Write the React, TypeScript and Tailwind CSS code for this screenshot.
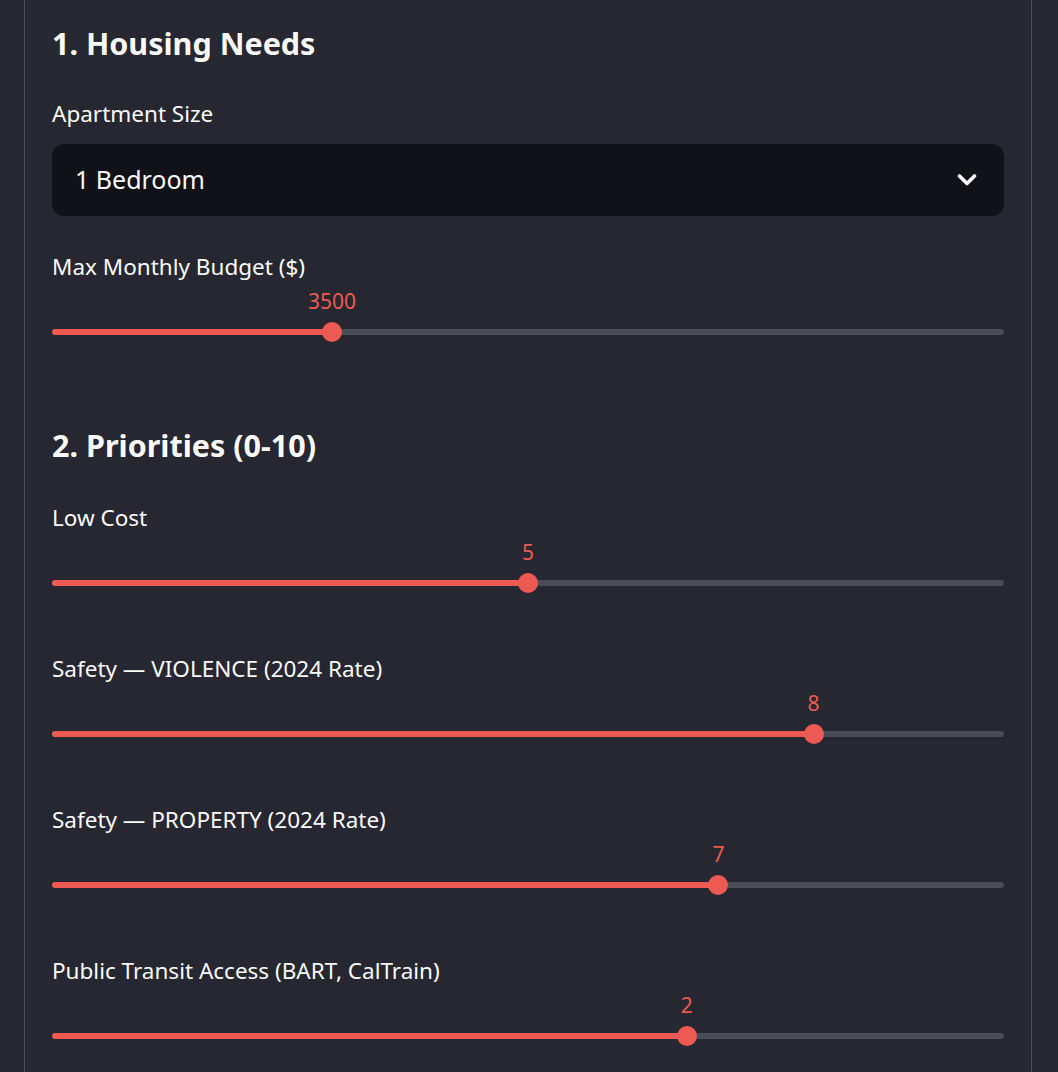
import { CSSProperties } from 'react';

type SliderProps = {
  label: string;
  value: string;
  frac: number;
};

const font: CSSProperties = { fontFamily: '"Noto Sans", "Open Sans", sans-serif' };

const Slider = ({ label, value, frac }: SliderProps) => {
  const pct = `${frac * 100}%`;
  return (
    <div className="flex flex-col">
      <div className="h-[30px] text-[22.5px] leading-[30px] text-[#fafafa]">{label}</div>
      {/* current value sits centred over the thumb */}
      <div className="mt-[7px] flex h-[24px]">
        <div className="flex-none" style={{ width: pct }} />
        <span className="-translate-x-1/2 text-[21px] leading-[24px] text-[#ec5a53]">{value}</span>
      </div>
      <div className="mt-[9px] flex h-[20px] items-center">
        <div className="h-[6px] flex-none rounded-l-full bg-[#ec5a53]" style={{ width: pct }} />
        <div className="z-10 -mx-[10px] h-[20px] w-[20px] flex-none rounded-full bg-[#ec5a53]" />
        <div className="h-[6px] flex-1 rounded-r-full bg-[#4a4c56]" />
      </div>
    </div>
  );
};

const App = () => {
  return (
    <div className="min-h-screen w-full bg-[#262730] text-[#fafafa]" style={font}>
      <div className="ml-[24px] flex min-h-screen w-[1008px] flex-col gap-[83px] border-x border-[#4a4b55] px-[27px] pt-[23px]">
        <section className="flex flex-col gap-[36px]">
          <h2 className="h-[40px] text-[30.5px] font-bold leading-[40px]">1. Housing Needs</h2>

          <div className="flex flex-col gap-[15px]">
            <label className="h-[30px] text-[22.5px] leading-[30px]">Apartment Size</label>
            <div className="flex h-[72px] items-center justify-between rounded-[12px] bg-[#101217] pl-[23px] pr-[27px]">
              <span className="text-[25px]">1 Bedroom</span>
              <svg width="20" height="14" viewBox="0 0 20 14" fill="none">
                <path d="M2.5 3 L10 10.5 L17.5 3" stroke="#fafafa" strokeWidth="3.6" strokeLinecap="round" strokeLinejoin="round" />
              </svg>
            </div>
          </div>

          <Slider label="Max Monthly Budget ($)" value="3500" frac={0.2942} />
        </section>

        <section className="flex flex-col gap-[38px]">
          <h2 className="h-[40px] text-[30.5px] font-bold leading-[40px]">2. Priorities (0-10)</h2>
          <div className="flex flex-col gap-[61px]">
            <Slider label="Low Cost" value="5" frac={0.5} />
            <Slider label="Safety — VIOLENCE (2024 Rate)" value="8" frac={0.8} />
            <Slider label="Safety — PROPERTY (2024 Rate)" value="7" frac={0.7} />
            <Slider label="Public Transit Access (BART, CalTrain)" value="2" frac={2 / 3} />
          </div>
        </section>
      </div>
    </div>
  );
};

export default App;
